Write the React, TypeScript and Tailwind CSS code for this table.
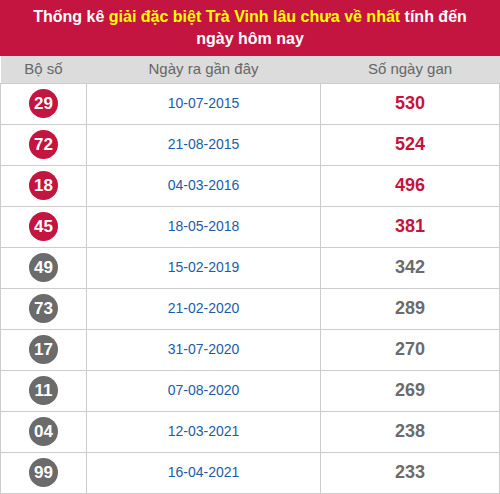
const rows = [
  { n: "29", d: "10-07-2015", g: 530, hot: true },
  { n: "72", d: "21-08-2015", g: 524, hot: true },
  { n: "18", d: "04-03-2016", g: 496, hot: true },
  { n: "45", d: "18-05-2018", g: 381, hot: true },
  { n: "49", d: "15-02-2019", g: 342, hot: false },
  { n: "73", d: "21-02-2020", g: 289, hot: false },
  { n: "17", d: "31-07-2020", g: 270, hot: false },
  { n: "11", d: "07-08-2020", g: 269, hot: false },
  { n: "04", d: "12-03-2021", g: 238, hot: false },
  { n: "99", d: "16-04-2021", g: 233, hot: false },
];

export default function App() {
  return (
    <div className="w-[500px] bg-white font-['Liberation_Sans',Arial,sans-serif]">
      <div className="bg-[#c41440] h-[56px] px-[28px] pt-[6px] text-center text-white font-bold text-[16px] leading-[22px]">
        Thống kê <span className="text-[#ffff00]">giải đặc biệt Trà Vinh lâu chưa về nhất</span> tính đến ngày hôm nay
      </div>
      <table className="w-full border-collapse table-fixed">
        <colgroup>
          <col className="w-[86px]" />
          <col className="w-[234px]" />
          <col />
        </colgroup>
        <thead>
          <tr className="bg-[#dcdcdc] h-[27px] text-[15px] text-[#666]">
            <th className="font-normal">Bộ số</th>
            <th className="font-normal">Ngày ra gần đây</th>
            <th className="font-normal">Số ngày gan</th>
          </tr>
        </thead>
        <tbody>
          {rows.map((r) => (
            <tr key={r.n} className="h-[41px]">
              <td className="border border-[#ccc] text-center">
                <span
                  className={
                    "inline-flex w-[29px] h-[29px] rounded-full items-center justify-center text-white font-bold text-[17px] align-middle " +
                    (r.hot ? "bg-[#c41440]" : "bg-[#6b6b6b]")
                  }
                >
                  {r.n}
                </span>
              </td>
              <td className="border border-[#ccc] text-center text-[14px] text-[#1a5ca8]">{r.d}</td>
              <td
                className={
                  "border border-[#ccc] text-center text-[18px] font-bold " +
                  (r.hot ? "text-[#c41440]" : "text-[#6b6b6b]")
                }
              >
                {r.g}
              </td>
            </tr>
          ))}
        </tbody>
      </table>
    </div>
  );
}
